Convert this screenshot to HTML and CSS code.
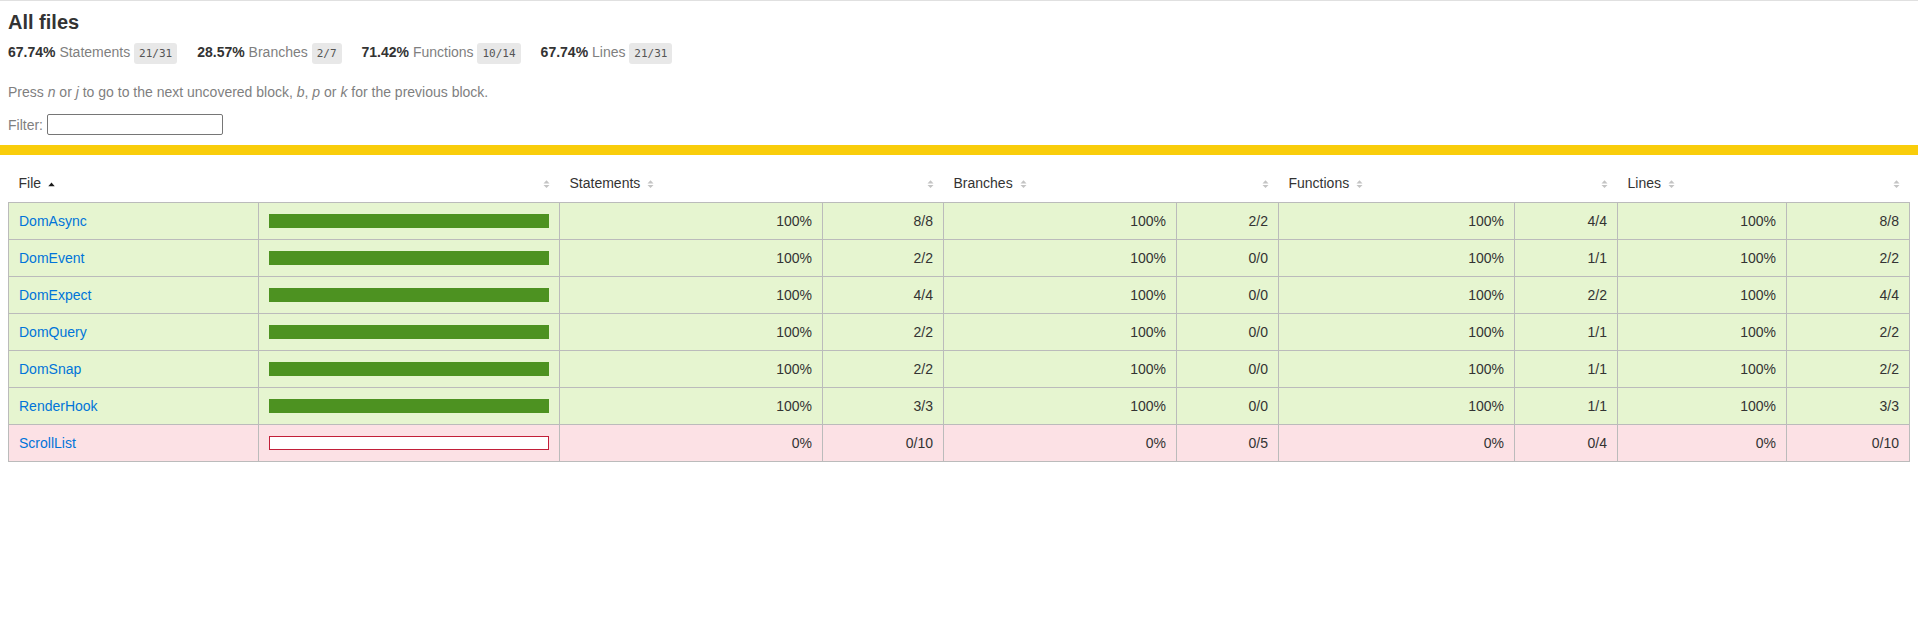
FILE: index.html
```html
<!doctype html>
<html lang="en">
<head>
<meta charset="utf-8">
<title>Code coverage report for All files</title>
<link rel="stylesheet" href="styles.css">
</head>
<body>
<div class="wrapper">
  <div class="top">
    <h1>All files</h1>
    <div class="stats">
      <div class="stat"><span class="strong">67.74% </span><span class="quiet">Statements</span> <span class="fraction">21/31</span></div>
      <div class="stat"><span class="strong">28.57% </span><span class="quiet">Branches</span> <span class="fraction">2/7</span></div>
      <div class="stat"><span class="strong">71.42% </span><span class="quiet">Functions</span> <span class="fraction">10/14</span></div>
      <div class="stat"><span class="strong">67.74% </span><span class="quiet">Lines</span> <span class="fraction">21/31</span></div>
    </div>
    <p class="quiet hint">Press <em>n</em> or <em>j</em> to go to the next uncovered block, <em>b</em>, <em>p</em> or <em>k</em> for the previous block.</p>
    <div class="quiet filter">Filter:&nbsp;<input type="search" class="search"></div>
  </div>
  <div class="status-line medium"></div>
  <div class="table-wrap">
    <table class="coverage-summary">
      <colgroup>
        <col class="c-file"><col class="c-pic"><col class="c-spct"><col class="c-sabs"><col class="c-bpct"><col class="c-babs"><col class="c-fpct"><col class="c-fabs"><col class="c-lpct"><col class="c-labs">
      </colgroup>
      <thead>
        <tr>
          <th class="file">File<svg class="sorter" width="7" height="10" viewBox="0 0 7 10"><path d="M0.3 8.3 L3.5 4.6 L6.7 8.3 Z" fill="#1a1a1a"/></svg></th>
          <th class="pic"><svg class="sorter" width="7" height="10" viewBox="0 0 7 10"><path d="M0.5 5.6 L3.5 2.3 L6.5 5.6 Z M0.5 7 L3.5 10 L6.5 7 Z" fill="#c4c4c4"/></svg></th>
          <th class="pct">Statements<svg class="sorter" width="7" height="10" viewBox="0 0 7 10"><path d="M0.5 5.6 L3.5 2.3 L6.5 5.6 Z M0.5 7 L3.5 10 L6.5 7 Z" fill="#c4c4c4"/></svg></th>
          <th class="abs"><svg class="sorter" width="7" height="10" viewBox="0 0 7 10"><path d="M0.5 5.6 L3.5 2.3 L6.5 5.6 Z M0.5 7 L3.5 10 L6.5 7 Z" fill="#c4c4c4"/></svg></th>
          <th class="pct">Branches<svg class="sorter" width="7" height="10" viewBox="0 0 7 10"><path d="M0.5 5.6 L3.5 2.3 L6.5 5.6 Z M0.5 7 L3.5 10 L6.5 7 Z" fill="#c4c4c4"/></svg></th>
          <th class="abs"><svg class="sorter" width="7" height="10" viewBox="0 0 7 10"><path d="M0.5 5.6 L3.5 2.3 L6.5 5.6 Z M0.5 7 L3.5 10 L6.5 7 Z" fill="#c4c4c4"/></svg></th>
          <th class="pct">Functions<svg class="sorter" width="7" height="10" viewBox="0 0 7 10"><path d="M0.5 5.6 L3.5 2.3 L6.5 5.6 Z M0.5 7 L3.5 10 L6.5 7 Z" fill="#c4c4c4"/></svg></th>
          <th class="abs"><svg class="sorter" width="7" height="10" viewBox="0 0 7 10"><path d="M0.5 5.6 L3.5 2.3 L6.5 5.6 Z M0.5 7 L3.5 10 L6.5 7 Z" fill="#c4c4c4"/></svg></th>
          <th class="pct">Lines<svg class="sorter" width="7" height="10" viewBox="0 0 7 10"><path d="M0.5 5.6 L3.5 2.3 L6.5 5.6 Z M0.5 7 L3.5 10 L6.5 7 Z" fill="#c4c4c4"/></svg></th>
          <th class="abs"><svg class="sorter" width="7" height="10" viewBox="0 0 7 10"><path d="M0.5 5.6 L3.5 2.3 L6.5 5.6 Z M0.5 7 L3.5 10 L6.5 7 Z" fill="#c4c4c4"/></svg></th>
        </tr>
      </thead>
      <tbody>
        <tr class="high">
          <td class="file"><a href="#">DomAsync</a></td>
          <td class="pic"><div class="chart"><div class="cover-fill" style="width:100%"></div></div></td>
          <td class="pct">100%</td><td class="abs">8/8</td>
          <td class="pct">100%</td><td class="abs">2/2</td>
          <td class="pct">100%</td><td class="abs">4/4</td>
          <td class="pct">100%</td><td class="abs">8/8</td>
        </tr>
        <tr class="high">
          <td class="file"><a href="#">DomEvent</a></td>
          <td class="pic"><div class="chart"><div class="cover-fill" style="width:100%"></div></div></td>
          <td class="pct">100%</td><td class="abs">2/2</td>
          <td class="pct">100%</td><td class="abs">0/0</td>
          <td class="pct">100%</td><td class="abs">1/1</td>
          <td class="pct">100%</td><td class="abs">2/2</td>
        </tr>
        <tr class="high">
          <td class="file"><a href="#">DomExpect</a></td>
          <td class="pic"><div class="chart"><div class="cover-fill" style="width:100%"></div></div></td>
          <td class="pct">100%</td><td class="abs">4/4</td>
          <td class="pct">100%</td><td class="abs">0/0</td>
          <td class="pct">100%</td><td class="abs">2/2</td>
          <td class="pct">100%</td><td class="abs">4/4</td>
        </tr>
        <tr class="high">
          <td class="file"><a href="#">DomQuery</a></td>
          <td class="pic"><div class="chart"><div class="cover-fill" style="width:100%"></div></div></td>
          <td class="pct">100%</td><td class="abs">2/2</td>
          <td class="pct">100%</td><td class="abs">0/0</td>
          <td class="pct">100%</td><td class="abs">1/1</td>
          <td class="pct">100%</td><td class="abs">2/2</td>
        </tr>
        <tr class="high">
          <td class="file"><a href="#">DomSnap</a></td>
          <td class="pic"><div class="chart"><div class="cover-fill" style="width:100%"></div></div></td>
          <td class="pct">100%</td><td class="abs">2/2</td>
          <td class="pct">100%</td><td class="abs">0/0</td>
          <td class="pct">100%</td><td class="abs">1/1</td>
          <td class="pct">100%</td><td class="abs">2/2</td>
        </tr>
        <tr class="high">
          <td class="file"><a href="#">RenderHook</a></td>
          <td class="pic"><div class="chart"><div class="cover-fill" style="width:100%"></div></div></td>
          <td class="pct">100%</td><td class="abs">3/3</td>
          <td class="pct">100%</td><td class="abs">0/0</td>
          <td class="pct">100%</td><td class="abs">1/1</td>
          <td class="pct">100%</td><td class="abs">3/3</td>
        </tr>
        <tr class="low">
          <td class="file"><a href="#">ScrollList</a></td>
          <td class="pic"><div class="chart"><div class="cover-empty" style="width:100%"></div></div></td>
          <td class="pct">0%</td><td class="abs">0/10</td>
          <td class="pct">0%</td><td class="abs">0/5</td>
          <td class="pct">0%</td><td class="abs">0/4</td>
          <td class="pct">0%</td><td class="abs">0/10</td>
        </tr>
      </tbody>
    </table>
  </div>
</div>
</body>
</html>
```

FILE: styles.css
```css
*, *::before, *::after { box-sizing: border-box; }
html, body { margin: 0; padding: 0; }
body {
  font-family: "Liberation Sans", Arial, sans-serif;
  font-size: 14px;
  color: #333;
  background: #fff;
  border-top: 1px solid #e0e0e0;
}
.top { padding: 10px 8px; }
h1 { font-size: 20px; margin: 0; font-weight: bold; color: #333; }
.stats { display: flex; }
.stat { padding: 10px 20px 10px 0; white-space: nowrap; }
.strong { font-weight: bold; }
.quiet { color: #7f7f7f; }
.fraction {
  font-family: "DejaVu Sans Mono", "Liberation Mono", monospace;
  font-size: 11px;
  color: #555;
  background: #e8e8e8;
  padding: 4px 5px;
  border-radius: 3px;
  vertical-align: middle;
}
.hint { margin: 14px 0; }
.filter { display: flex; align-items: center; height: 21px; }
.search {
  width: 176px;
  height: 21px;
  margin: 0;
  padding: 1px 2px;
  border: 1px solid #767676;
  border-radius: 2px;
  background: #fff;
  font: 13px "Liberation Sans", Arial, sans-serif;
}
.status-line { height: 10px; }
.status-line.medium { background: #f9cd0b; }
.table-wrap { padding: 10px 8px; }
.coverage-summary {
  border-collapse: collapse;
  width: 100%;
  table-layout: fixed;
}
.c-file { width: 250px; }
.c-pic { width: 301px; }
.c-spct { width: 263px; }
.c-sabs { width: 121px; }
.c-bpct { width: 233px; }
.c-babs { width: 102px; }
.c-fpct { width: 236px; }
.c-fabs { width: 103px; }
.c-lpct { width: 169px; }
.coverage-summary tr { border-bottom: 1px solid #bbb; }
.coverage-summary tbody { border: 1px solid #bbb; }
.coverage-summary td, .coverage-summary th { padding: 10px; line-height: 16px; }
.coverage-summary th { padding-bottom: 11px; }
.coverage-summary td { border-right: 1px solid #bbb; white-space: nowrap; }
.coverage-summary td:last-child { border-right: none; }
.coverage-summary th { text-align: left; font-weight: normal; white-space: nowrap; color: #333; }
.coverage-summary th.pic, .coverage-summary th.abs,
.coverage-summary td.pct, .coverage-summary td.abs { text-align: right; }
.sorter { display: inline-block; width: 7px; height: 10px; margin-left: 7px; vertical-align: baseline; }
.coverage-summary a { color: #0074d9; text-decoration: none; }
.high { background: rgb(230, 245, 208); }
.low { background: #fce1e5; }
.chart { line-height: 0; }
.high .chart { border: 1px solid rgb(77, 146, 33); }
.low .chart { border: 1px solid #c21f39; }
.cover-fill, .cover-empty { display: inline-block; height: 12px; }
.high .cover-fill { background: rgb(77, 146, 33); }
.cover-empty { background: #fff; }
```
